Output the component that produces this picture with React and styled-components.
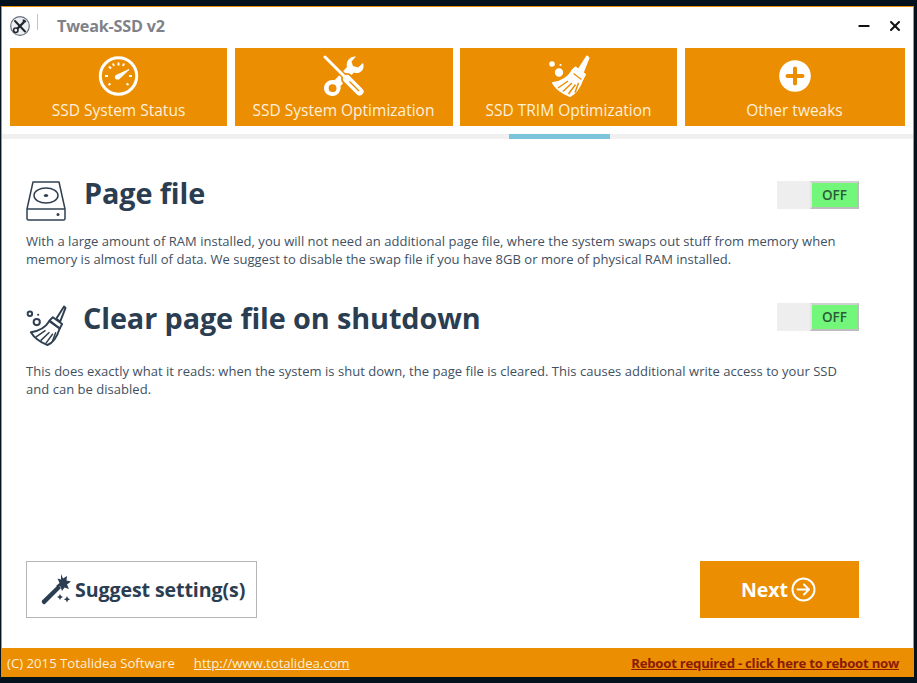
import React from 'react';
import styled, { createGlobalStyle } from 'styled-components';
import { X, Minus } from 'lucide-react';

const Global = createGlobalStyle`
  html, body { margin: 0; padding: 0; background: #03121c; }
  body { font-family: "Open Sans", "Noto Sans", "Liberation Sans", sans-serif; }
`;

const Screen = styled.div`
  width: 917px;
  height: 683px;
  padding: 6px 3px 6px 1px;
  box-sizing: border-box;
  background: #03121c;
  overflow: hidden;
`;

const Window = styled.div`
  height: 100%;
  display: flex;
  flex-direction: column;
  background: #fff;
  border: 1px solid #ec8e02;
  border-bottom: 0;
  box-sizing: border-box;
`;

const TitleBar = styled.div`
  height: 41px;
  flex: none;
  display: flex;
  align-items: center;
  padding: 0 10px 3px 8px;
  box-sizing: border-box;
`;

const AppBadge = styled.div`
  width: 20px;
  height: 20px;
  flex: none;
`;

const Tick = styled.div`
  width: 1px;
  height: 16px;
  margin: -8px 19px 0 7px;
  background: #c4c4c4;
`;

const AppTitle = styled.div`
  flex: 1;
  font-size: 16.2px;
  font-weight: 700;
  color: #7f8289;
  letter-spacing: -0.2px;
`;

const WinButton = styled.div`
  width: 16px;
  height: 16px;
  margin-left: ${p => p.$gap}px;
  display: flex;
  color: #111;
`;

const Tabs = styled.div`
  display: grid;
  grid-template-columns: 217px 218px 217px 220px;
  column-gap: 7.5px;
  padding: 0 7px 0 8px;
  flex: none;
`;

const Tab = styled.div`
  height: 78px;
  background: #ec8e02;
  display: flex;
  flex-direction: column;
  align-items: center;
  padding-top: 7px;
  box-sizing: border-box;
  color: #fff;
`;

const TabIcon = styled.div`
  width: 44px;
  height: 42px;
  display: flex;
  align-items: center;
  justify-content: center;
`;

const TabLabel = styled.div`
  font-size: 15.5px;
  line-height: 20px;
  margin-top: 3px;
  color: #fdf0dc;
  white-space: nowrap;
`;

const Strip = styled.div`
  height: 4.5px;
  margin-top: 8px;
  background: #f0f0f0;
  flex: none;
  display: flex;
  padding-left: 507px;
`;

const Marker = styled.div`
  width: 101px;
  background: #7cc4dc;
`;

const Content = styled.div`
  flex: 1;
  display: flex;
  flex-direction: column;
  padding: 0 54px 0 24px;
`;

const Setting = styled.section`
  margin-top: ${p => p.$top}px;
  height: ${p => p.$height}px;
  flex: none;
`;

const SettingHead = styled.div`
  display: flex;
  align-items: flex-start;
  height: 44px;
`;

const SettingIcon = styled.div`
  width: 41px;
  height: 41px;
  margin: ${p => p.$top}px ${p => p.$gap}px 0 0;
  flex: none;
`;

const Heading = styled.h2`
  flex: 1;
  margin: 1px 0 0;
  font-size: 28.8px;
  line-height: 40px;
  font-weight: 700;
  color: #2b3d51;
  letter-spacing: -0.1px;
`;

const Toggle = styled.div`
  width: 82px;
  height: 28px;
  margin-top: ${p => p.$top}px;
  display: flex;
  justify-content: flex-end;
  background: #eeeeee;
  flex: none;
`;

const ToggleKnob = styled.div`
  width: 49px;
  box-sizing: border-box;
  background: #72f77a;
  border: 2px solid #e4e4e4;
  border-right-color: #bdbdbd;
  border-top-color: #d0d0d0;
  border-bottom-color: #bdbdbd;
  font-size: 13.5px;
  font-weight: 600;
  line-height: 24px;
  text-align: center;
  color: #2c5a3a;
`;

const Description = styled.p`
  margin: ${p => p.$top}px 0 0;
  font-size: 13px;
  line-height: 18px;
  color: #41505f;
  letter-spacing: 0.03px;
  white-space: nowrap;
`;

const Actions = styled.div`
  margin-top: auto;
  display: flex;
  justify-content: space-between;
  margin-bottom: 30px;
`;

const SuggestButton = styled.div`
  width: 231px;
  height: 57px;
  box-sizing: border-box;
  border: 1px solid #b5b5b5;
  display: flex;
  align-items: center;
  gap: 3px;
  padding-left: 14px;
  font-size: 19.6px;
  font-weight: 700;
  letter-spacing: -0.1px;
  color: #2b3d51;
`;

const NextButton = styled.div`
  width: 159px;
  height: 57px;
  padding-right: 2px;
  box-sizing: border-box;
  background: #ec8e02;
  display: flex;
  align-items: center;
  justify-content: center;
  gap: 3px;
  font-size: 19.5px;
  font-weight: 700;
  color: #fff;
`;

const Footer = styled.footer`
  height: 29px;
  flex: none;
  background: #ec8e02;
  display: flex;
  align-items: center;
  padding: 0 14px 0 5px;
  font-size: 13.2px;
  color: #fbeeda;
`;

const FooterLink = styled.span`
  margin-left: 19px;
  text-decoration: underline;
  letter-spacing: -0.05px;
`;

const RebootLink = styled.span`
  margin-left: auto;
  font-weight: 700;
  text-decoration: underline;
  color: #8b1a06;
  letter-spacing: -0.25px;
`;

function GaugeIcon() {
  return (
    <svg width="42" height="42" viewBox="0 0 42 42" fill="none" stroke="#fff">
      <circle cx="20.500" cy="21" r="18.200" strokeWidth="3" />
      <path d="M20.500 7.500v3M11 11.500l2 2M7 21h3M31 21h3M10.500 30l2-1.500M30.500 30l-2-1.500M15 8.500l1 2.500M26 8.500l-1 2.500" strokeWidth="2" />
      <path d="M18.500 20.300L31 14.500L21.300 23.800Z" fill="#fff" strokeWidth="1" />
      <circle cx="19.500" cy="22" r="2.600" fill="#fff" strokeWidth="0" />
    </svg>
  );
}

function ToolsIcon() {
  return (
    <svg width="44" height="42" viewBox="0 0 44 42">
      {/* wrench: jaw top right, ring bottom left */}
      <path
        fill="#fff"
        fillRule="evenodd"
        d="M34 1.500L29.500 6.500L31 11L36 12.500L41 8C42.500 12 41 16 37.500 17.500C35.500 18.300 33.500 18.200 32 17.500L18.500 31C19.500 36 15.500 41 10.500 41C5.500 41 1.500 37 2 32.500C2.500 27.500 7.500 24 12.500 25.300L25 12C24 8 26 4 29.500 2.300C31 1.600 32.500 1.300 34 1.500ZM10.500 29.300A3.900 3.900 0 1 0 10.600 37.100A3.900 3.900 0 1 0 10.500 29.300Z"
      />
      {/* screwdriver over it, with a gap in the tab colour */}
      <path d="M3 2L23 22" stroke="#ec8e02" strokeWidth="6" />
      <path d="M25 24L38 37" stroke="#ec8e02" strokeWidth="12" strokeLinecap="round" />
      <path d="M3 2L23 22" stroke="#fff" strokeWidth="3" strokeLinecap="round" />
      <path d="M25 24L37.500 36.500" stroke="#fff" strokeWidth="8" strokeLinecap="round" />
      <path d="M27.500 26.500L37 36" stroke="#ec8e02" strokeWidth="1.400" />
    </svg>
  );
}

function BroomIcon({ color, solid, width, height }) {
  const fill = solid ? color : 'none';
  return (
    <svg width={width} height={height} viewBox="0 0 42 42" fill="none" stroke={color} strokeWidth="2" strokeLinejoin="round">
      <path d="M39 1.500L31 14L35 17L40.500 3Z" fill={fill} />
      <path d="M27.500 12.500L37 19.500L34.500 24L24 16Z" fill={fill} />
      <path d="M24 16.500C20 23 13 27 5 28C8 33 14 38 22 41C27 39 32 32 34.500 24Z" fill={fill} />
      <path d="M10 33L20 26M15 36.500L24 28M20.500 39L27.500 29.500M27 37.500L30.500 28" stroke={solid ? '#ec8e02' : color} strokeWidth="1.500" />
      {solid && <path d="M25.500 18.500L33.500 24.500" stroke="#ec8e02" strokeWidth="1.300" />}
      <circle cx="4" cy="9" r={solid ? 1.800 : 2.300} fill={fill} />
      <circle cx="11" cy="17.500" r="3.200" fill={fill} />
      <circle cx="12.500" cy="10" r="1.100" fill={color} stroke="none" />
    </svg>
  );
}

function PlusIcon() {
  return (
    <svg width="32" height="32" viewBox="0 0 32 32">
      <circle cx="16" cy="16" r="15.800" fill="#fff" />
      <path d="M16 8.500v15M8.500 16h15" stroke="#ec8e02" strokeWidth="4" strokeLinecap="round" />
    </svg>
  );
}

function DiskIcon() {
  return (
    <svg width="40" height="40" viewBox="0 0 40 40" fill="none" stroke="#2f4052" strokeWidth="1.500">
      <path d="M7 1h26l6 27v9.500a1.500 1.500 0 0 1-1.500 1.500H2.500A1.500 1.500 0 0 1 1 37.500V28Z" strokeLinejoin="round" />
      <path d="M1 28h38" />
      <ellipse cx="20" cy="14.500" rx="12" ry="7.500" />
      <ellipse cx="20" cy="14.500" rx="2.200" ry="1.500" fill="#2f4052" stroke="none" />
      <circle cx="32" cy="33.500" r="1.500" fill="#2f4052" stroke="none" />
    </svg>
  );
}

function WandIcon() {
  return (
    <svg width="31" height="31" viewBox="0 0 31 31" fill="#2b3d51">
      <path d="M1 26.500L17 11L20 14L4 30C2.500 31 0 28.500 1 26.500Z" />
      <path d="M20 0L22 4.500L26 2L25.500 6.500L30 7.500L26 10.500L28 15L23.500 13.500L21 17L19.500 12.500L15 12L18.500 9L16.500 4.500L20 5.500Z" />
      <path d="M19 20l1 2 2 1-2 1-1 2-1-2-2-1 2-1zM26 22l1 2.200 2.200 1-2.200 1-1 2.200-1-2.200-2.200-1 2.200-1z" />
    </svg>
  );
}

function NextArrow() {
  return (
    <svg width="25" height="25" viewBox="0 0 25 25" fill="none" stroke="#fff" strokeWidth="2" strokeLinecap="round" strokeLinejoin="round">
      <circle cx="12.500" cy="12.500" r="11" />
      <path d="M6.500 12.500h11M13 7.500l5 5-5 5" />
    </svg>
  );
}

function AppLogo() {
  return (
    <svg width="20" height="20" viewBox="0 0 20 20">
      <circle cx="10" cy="10" r="9.300" fill="#eef0f3" stroke="#6a727e" strokeWidth="1.200" />
      <path d="M5 5L15 15.500" stroke="#20262e" strokeWidth="2" strokeLinecap="round" />
      <path d="M14 6L6 14" stroke="#20262e" strokeWidth="2.400" />
      <path d="M12.500 3.800C14 3 16 4 16.400 6L14.500 6.800L13 6Z" fill="#20262e" />
      <circle cx="5.800" cy="14.300" r="2.200" fill="#eef0f3" stroke="#20262e" strokeWidth="1.500" />
    </svg>
  );
}

const tabs = [
  { label: 'SSD System Status', icon: <GaugeIcon /> },
  { label: 'SSD System Optimization', icon: <ToolsIcon /> },
  { label: 'SSD TRIM Optimization', icon: <BroomIcon color="#fff" solid width={42} height={42} /> },
  { label: 'Other tweaks', icon: <PlusIcon /> },
];

export default function App() {
  return (
    <Screen>
      <Global />
      <Window>
        <TitleBar>
          <AppBadge><AppLogo /></AppBadge>
          <Tick />
          <AppTitle>Tweak-SSD v2</AppTitle>
          <WinButton><Minus size={16} strokeWidth={3} /></WinButton>
          <WinButton $gap={15}><X size={16} strokeWidth={3} /></WinButton>
        </TitleBar>
        <Tabs>
          {tabs.map(t => (
            <Tab key={t.label}>
              <TabIcon>{t.icon}</TabIcon>
              <TabLabel>{t.label}</TabLabel>
            </Tab>
          ))}
        </Tabs>
        <Strip><Marker /></Strip>
        <Content>
          <Setting $top={33} $height={125}>
            <SettingHead>
              <SettingIcon $top={9} $gap={17}><DiskIcon /></SettingIcon>
              <Heading>Page file</Heading>
              <Toggle $top={9}><ToggleKnob>OFF</ToggleKnob></Toggle>
            </SettingHead>
            <Description $top={16}>
              With a large amount of RAM installed, you will not need an additional page file, where the system swaps out stuff from memory when
              <br />
              memory is almost full of data. We suggest to disable the swap file if you have 8GB or more of physical RAM installed.
            </Description>
          </Setting>
          <Setting $top={0} $height={110}>
            <SettingHead>
              <SettingIcon $top={8} $gap={16}><BroomIcon color="#2f4052" width={41} height={41} /></SettingIcon>
              <Heading>Clear page file on shutdown</Heading>
              <Toggle $top={6}><ToggleKnob>OFF</ToggleKnob></Toggle>
            </SettingHead>
            <Description $top={21}>
              This does exactly what it reads: when the system is shut down, the page file is cleared. This causes additional write access to your SSD
              <br />
              and can be disabled.
            </Description>
          </Setting>
          <Actions>
            <SuggestButton><WandIcon />Suggest setting(s)</SuggestButton>
            <NextButton>Next<NextArrow /></NextButton>
          </Actions>
        </Content>
        <Footer>
          <span>(C) 2015 Totalidea Software</span>
          <FooterLink>http://www.totalidea.com</FooterLink>
          <RebootLink>Reboot required - click here to reboot now</RebootLink>
        </Footer>
      </Window>
    </Screen>
  );
}
